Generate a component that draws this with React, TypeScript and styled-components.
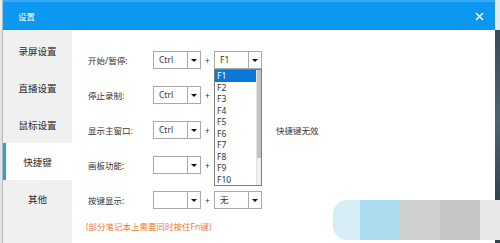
import styled, { createGlobalStyle } from 'styled-components';

const GlobalStyle = createGlobalStyle`
  html, body {
    margin: 0;
    padding: 0;
    background: #fff;
  }
  * {
    box-sizing: border-box;
  }
`;

const navItems = ['录屏设置', '直播设置', '鼠标设置', '快捷键', '其他'];
const keys = ['F1', 'F2', 'F3', 'F4', 'F5', 'F6', 'F7', 'F8', 'F9', 'F10'];

interface RowData {
  label: string;
  mod: string;
  key?: string;
  open?: boolean;
  hint?: string;
}

const rows: RowData[] = [
  { label: '开始/暂停:', mod: 'Ctrl', key: 'F1', open: true },
  { label: '停止录制:', mod: 'Ctrl' },
  { label: '显示主窗口:', mod: 'Ctrl', hint: '快捷键无效' },
  { label: '画板功能:', mod: '' },
  { label: '按键显示:', mod: '', key: '无' },
];

const Select = ({ value, children }: { value: string; children?: React.ReactNode }) => (
  <SelectBox>
    <SelectValue>{value}</SelectValue>
    <SelectButton>
      <Arrow />
    </SelectButton>
    {children}
  </SelectBox>
);

export default function App() {
  return (
    <>
      <GlobalStyle />
      <Page>
        <LeftStrip />
        <Dialog>
          <TitleBar>
            <Title>设置</Title>
            <svg width="9" height="9" viewBox="0 0 9 9">
              <path d="M1 1 L8 8 M8 1 L1 8" stroke="#fff" strokeWidth="1.5" />
            </svg>
          </TitleBar>
          <Body>
            <Sidebar>
              {navItems.map((item) => (
                <NavItem key={item} $active={item === '快捷键'}>
                  {item}
                </NavItem>
              ))}
            </Sidebar>
            <Content>
              <Rows>
                {rows.map((row) => (
                  <Row key={row.label}>
                    <Label>{row.label}</Label>
                    <Select value={row.mod} />
                    <Plus>+</Plus>
                    {row.key !== undefined && (
                      <Select value={row.key}>
                        {row.open && (
                          <DropList>
                            <Options>
                              {keys.map((k) => (
                                <Option key={k} $selected={k === 'F1'}>
                                  {k}
                                </Option>
                              ))}
                            </Options>
                            <ScrollTrack>
                              <ScrollThumb />
                            </ScrollTrack>
                          </DropList>
                        )}
                      </Select>
                    )}
                    {row.hint && <Hint>{row.hint}</Hint>}
                  </Row>
                ))}
              </Rows>
              <Note>(部分笔记本上需要同时按住Fn键)</Note>
            </Content>
          </Body>
        </Dialog>
        <RightStrip />
        <Swatches>
          <Swatch $color="#d7edf6" $width={27} $round />
          <Swatch $color="#abdcef" $width={40} />
          <Swatch $color="#cfd1d1" $width={40} />
          <Swatch $color="#c5c6c7" $width={40} />
          <Swatch $color="#e8e8e8" $width={20} />
        </Swatches>
      </Page>
    </>
  );
}

const Page = styled.div`
  width: 500px;
  height: 243px;
  position: relative;
  display: flex;
  overflow: hidden;
  background: #fff;
  font-family: 'Noto Sans', 'Noto Sans CJK SC', sans-serif;
  color: #333;
`;

const LeftStrip = styled.div`
  width: 3px;
  background: linear-gradient(#e9eef2 0 30px, #e3e3e3 30px);
  box-shadow: inset -1px 0 0 #b8b8b8;
`;

const RightStrip = styled.div`
  width: 5px;
  background: linear-gradient(#e4ebf0 0 30px, #3a4a54 30px, #50626c 120px, #34434c 200px);
`;

const Dialog = styled.div`
  flex: 1;
  display: flex;
  flex-direction: column;
`;

const TitleBar = styled.div`
  height: 30px;
  display: flex;
  align-items: center;
  justify-content: space-between;
  padding: 0 11px 0 15px;
  background: #0c98f0;
  border-top: 2px solid #39a9f2;
`;

const Title = styled.span`
  color: #fff;
  font-size: 8.5px;
`;

const Body = styled.div`
  flex: 1;
  display: flex;
`;

const Sidebar = styled.div`
  width: 69px;
  padding-top: 2px;
  background: #f0f0f0;
`;

const NavItem = styled.div<{ $active?: boolean }>`
  height: 37px;
  display: flex;
  align-items: center;
  justify-content: center;
  font-size: 9.5px;
  color: #2a2a2a;
  background: ${({ $active }) => ($active ? '#fff' : 'transparent')};
  box-shadow: ${({ $active }) => ($active ? 'inset 3px 0 0 #2a9ee4' : 'none')};
`;

const Content = styled.div`
  flex: 1;
  padding: 21px 0 0 16px;
  display: flex;
  flex-direction: column;
`;

const Rows = styled.div`
  display: flex;
  flex-direction: column;
  gap: 17px;
`;

const Row = styled.div`
  height: 18px;
  display: flex;
  align-items: center;
  font-size: 8.5px;
`;

const Label = styled.span`
  width: 65px;
`;

const SelectBox = styled.div`
  width: 48px;
  height: 18px;
  position: relative;
  display: flex;
  border: 1px solid #a9a9a9;
  background: #fff;
`;

const SelectValue = styled.span`
  flex: 1;
  padding-left: 5px;
  line-height: 16px;
  font-size: 8.5px;
`;

const SelectButton = styled.span`
  width: 13px;
  display: flex;
  align-items: center;
  justify-content: center;
  border-left: 1px solid #a9a9a9;
`;

const Arrow = styled.span`
  width: 0;
  height: 0;
  border-left: 3px solid transparent;
  border-right: 3px solid transparent;
  border-top: 3px solid #111;
`;

const Plus = styled.span`
  width: 13px;
  text-align: center;
`;

const Hint = styled.span`
  margin-left: 62px;
`;

const DropList = styled.div`
  position: absolute;
  top: 17px;
  left: -1px;
  width: 48px;
  height: 117px;
  display: flex;
  border: 1px solid #7c7c7c;
  background: #fff;
  z-index: 2;
`;

const Options = styled.div`
  flex: 1;
`;

const Option = styled.div<{ $selected?: boolean }>`
  height: 11.5px;
  line-height: 11.5px;
  padding-left: 2px;
  font-size: 8.5px;
  color: ${({ $selected }) => ($selected ? '#fff' : '#333')};
  background: ${({ $selected }) => ($selected ? '#0a78d6' : 'transparent')};
`;

const ScrollTrack = styled.div`
  width: 5px;
  background: #f0f0f0;
  border-left: 1px solid #e2e2e2;
`;

const ScrollThumb = styled.div`
  height: 88px;
  background: #c3c3c3;
`;

const Note = styled.div`
  margin: 12px 0 0 -2px;
  line-height: 12px;
  font-size: 8.5px;
  color: #f07a32;
`;

const Swatches = styled.div`
  position: absolute;
  right: 0;
  bottom: 3px;
  height: 40px;
  display: flex;
`;

const Swatch = styled.div<{ $color: string; $width: number; $round?: boolean }>`
  width: ${({ $width }) => $width}px;
  background: ${({ $color }) => $color};
  border-radius: ${({ $round }) => ($round ? '14px 0 0 14px' : '0')};
`;
